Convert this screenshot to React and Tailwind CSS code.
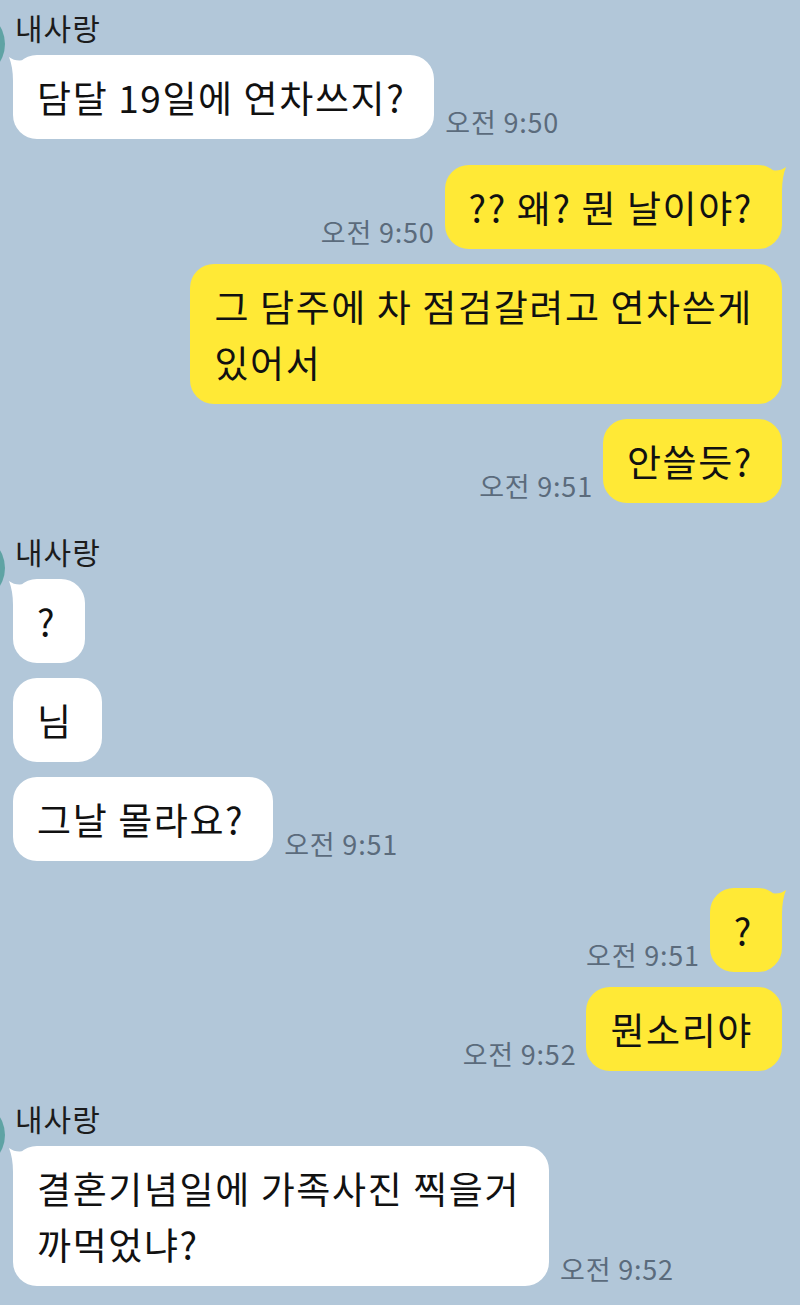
import React from 'react';

const font = { fontFamily: '"Noto Sans CJK KR", "Noto Sans", sans-serif' };

function Tail({ side, color }) {
  const pos = side === 'left' ? 'left-[-6px]' : 'right-[-6px] scale-x-[-1]';
  return (
    <svg className={`absolute top-0 ${pos}`} width="24" height="28" viewBox="0 0 24 28">
      <path d="M2 2 Q10 8 20 4 L20 26 L6 26 Q6 12 2 2 Z" fill={color} />
    </svg>
  );
}

function Bubble({ lines, mine, first }) {
  const bg = mine ? 'bg-[#ffe936]' : 'bg-white';
  return (
    <div className={`relative ${bg} rounded-[24px] pl-[24px] pr-[29px] py-[14px] text-[37px] leading-[56px] tracking-[1.6px] text-[#111] whitespace-nowrap`}>
      {first && <Tail side={mine ? 'right' : 'left'} color={mine ? '#ffe936' : '#ffffff'} />}
      <span className="relative">
        {lines.map((l, i) => (
          <React.Fragment key={i}>
            {i > 0 && <br />}
            {l}
          </React.Fragment>
        ))}
      </span>
    </div>
  );
}

function Time({ children }) {
  return <span className="text-[27px] leading-[30px] tracking-[0.8px] text-[#5b6b7c] mb-[2px] whitespace-nowrap">{children}</span>;
}

function Received({ messages, className }) {
  return (
    <div className={`flex ${className}`}>
      <div className="shrink-0 w-[68px] h-[68px] rounded-full bg-[#5fa3a4] ml-[-63px] mt-[3px]" />
      <div className="flex flex-col ml-[8px]">
        <div className="text-[30px] leading-[40px] tracking-[1px] text-[#1c1c1c] ml-[2px] mb-[8px]">내사랑</div>
        <div className="flex flex-col gap-[15px]">
          {messages.map((m, i) => (
            <div key={i} className="flex items-end gap-[11px]">
              <Bubble lines={m.lines} first={i === 0} />
              {m.time && <Time>{m.time}</Time>}
            </div>
          ))}
        </div>
      </div>
    </div>
  );
}

function Sent({ messages, className }) {
  return (
    <div className={`flex flex-col items-end gap-[15px] pr-[18px] ${className}`}>
      {messages.map((m, i) => (
        <div key={i} className="flex items-end gap-[10px]">
          {m.time && <Time>{m.time}</Time>}
          <Bubble lines={m.lines} mine first={i === 0} />
        </div>
      ))}
    </div>
  );
}

export default function App() {
  return (
    <div className="w-[800px] min-h-[1305px] bg-[#b2c7d9] pt-[7px] overflow-hidden" style={font}>
      <Received messages={[{ lines: ['담달 19일에 연차쓰지?'], time: '오전 9:50' }]} />
      <Sent
        className="mt-[26px]"
        messages={[
          { lines: ['?? 왜? 뭔 날이야?'], time: '오전 9:50' },
          { lines: ['그 담주에 차 점검갈려고 연차쓴게', '있어서'] },
          { lines: ['안쓸듯?'], time: '오전 9:51' },
        ]}
      />
      <Received
        className="mt-[28px]"
        messages={[
          { lines: ['?'] },
          { lines: ['님'] },
          { lines: ['그날 몰라요?'], time: '오전 9:51' },
        ]}
      />
      <Sent
        className="mt-[27px]"
        messages={[
          { lines: ['?'], time: '오전 9:51' },
          { lines: ['뭔소리야'], time: '오전 9:52' },
        ]}
      />
      <Received
        className="mt-[27px]"
        messages={[{ lines: ['결혼기념일에 가족사진 찍을거', '까먹었냐?'], time: '오전 9:52' }]}
      />
    </div>
  );
}
